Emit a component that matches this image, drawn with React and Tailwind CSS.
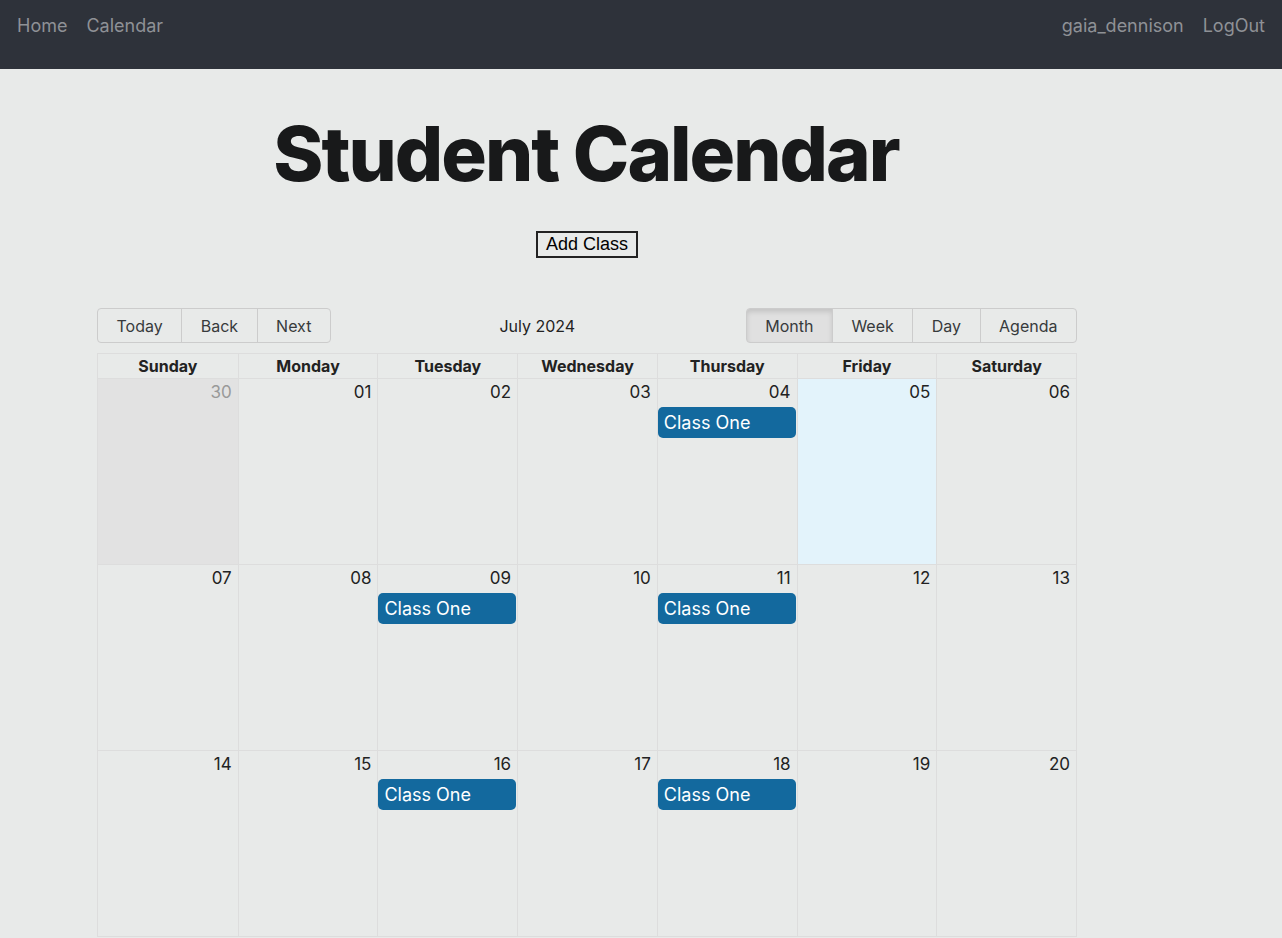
import React from 'react'

const days = ['Sunday', 'Monday', 'Tuesday', 'Wednesday', 'Thursday', 'Friday', 'Saturday']

const weeks = [
  ['30', '01', '02', '03', '04', '05', '06'],
  ['07', '08', '09', '10', '11', '12', '13'],
  ['14', '15', '16', '17', '18', '19', '20'],
]

const events = { '04': true, '09': true, '11': true, '16': true, '18': true }

const ToolbarGroup = ({ items, active }) => (
  <div className="flex">
    {items.map((label, i) => (
      <button
        key={label}
        className={`h-[35px] px-[18.5px] text-[16px] text-[#373a3c] border border-[#cccccc] ${
          i === 0 ? 'rounded-l-[4px]' : '-ml-px'
        } ${i === items.length - 1 ? 'rounded-r-[4px]' : ''} ${
          label === active ? 'bg-[#e0e0e0] shadow-[inset_0_3px_5px_rgba(0,0,0,0.125)]' : ''
        }`}
      >
        {label}
      </button>
    ))}
  </div>
)

export default function App() {
  return (
    <div className="min-h-[938px] bg-[#e8eae9] font-['Inter',sans-serif]">
      {/* Navbar */}
      <nav className="h-[69px] bg-[#2e323a] flex justify-between px-[17px] pt-[12px] text-[18px] text-[#8e9196]">
        <div className="flex gap-[19px]">
          <span>Home</span>
          <span>Calendar</span>
        </div>
        <div className="flex gap-[19px]">
          <span>gaia_dennison</span>
          <span>LogOut</span>
        </div>
      </nav>

      <div className="w-[980px] ml-[97px]">
        <h1 className="text-center text-[76px] font-extrabold text-[#18191a] leading-none pt-[46px] tracking-[-2px] pr-[2px]">
          Student Calendar
        </h1>
        <div className="flex justify-center mt-[40px]">
          <button className="border-2 border-[#222] px-[8px] h-[27px] box-border text-[18px] leading-[23px] text-black font-['Liberation_Sans',Arial,sans-serif]">
            Add Class
          </button>
        </div>

        {/* Toolbar */}
        <div className="flex items-center justify-between mt-[50px] mb-[10px]">
          <ToolbarGroup items={['Today', 'Back', 'Next']} />
          <div className="text-[16px] text-[#222] pr-[2px]">July 2024</div>
          <ToolbarGroup items={['Month', 'Week', 'Day', 'Agenda']} active="Month" />
        </div>

        {/* Month view */}
        <div className="border border-[#dddddd] border-b-0">
          <div className="grid grid-cols-7">
            {days.map((d, i) => (
              <div
                key={d}
                className={`h-[25px] text-center text-[16px] font-bold text-[#222] leading-[25px] border-b border-[#dddddd] ${
                  i > 0 ? 'border-l' : ''
                }`}
              >
                {d}
              </div>
            ))}
          </div>
          {weeks.map((week, wi) => (
            <div key={wi} className="grid grid-cols-7 h-[186px] border-b border-[#dddddd]">
              {week.map((n, i) => {
                const off = wi === 0 && i === 0
                const today = n === '05'
                return (
                  <div
                    key={n}
                    className={`flex flex-col ${i > 0 ? 'border-l border-[#dddddd]' : ''} ${
                      off ? 'bg-[#e2e2e2]' : today ? 'bg-[#e3f3fb]' : ''
                    }`}
                  >
                    <div
                      className={`text-right pr-[6px] pt-[3px] text-[17px] leading-[20px] ${
                        off ? 'text-[#999]' : 'text-[#222]'
                      }`}
                    >
                      {n}
                    </div>
                    {events[n] && !off && (
                      <div className="ml-0 mr-[1px] mt-[5px] h-[31px] rounded-[5px] bg-[#13699e] text-white text-[18px] leading-[31px] px-[6px]">
                        Class One
                      </div>
                    )}
                  </div>
                )
              })}
            </div>
          ))}
        </div>
      </div>
    </div>
  )
}
